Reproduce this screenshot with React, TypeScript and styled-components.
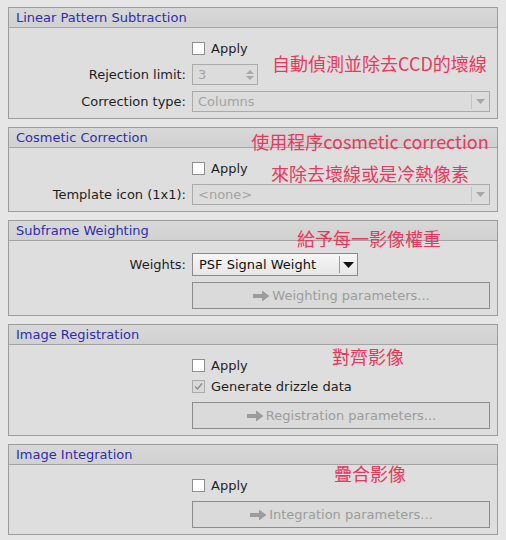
import styled, { createGlobalStyle } from 'styled-components';

const GlobalStyle = createGlobalStyle`
  body {
    margin: 7px 8px;
    background: #e6e6e6;
    font-family: 'DejaVu Sans', 'Liberation Sans', sans-serif;
    font-size: 13px;
    color: #1e1e1e;
  }
`;

const Section = styled.section`
  position: relative;
  border: 1px solid #9c9c9c;
  background: #dedede;
  margin-bottom: 8px;
`;

const Header = styled.div`
  height: 19px;
  line-height: 19px;
  padding-left: 7px;
  border-bottom: 1px solid #a4a4a4;
  background: linear-gradient(#d8d8d8, #d1d1d1);
  color: #2d2db0;
`;

const Body = styled.div<{ $pt?: number }>`
  display: flex;
  flex-direction: column;
  gap: 6px;
  padding: ${({ $pt }) => $pt ?? 10}px 7px 6px 0;
`;

const Row = styled.div<{ $h?: number }>`
  display: grid;
  grid-template-columns: 177px 1fr;
  column-gap: 6px;
  align-items: center;
  height: ${({ $h }) => $h ?? 21}px;
`;

const Label = styled.span`
  text-align: right;
  white-space: nowrap;
`;

const CheckGroup = styled.div`
  display: flex;
  flex-direction: column;
  gap: 1px;
`;

const CheckLabel = styled.label`
  display: flex;
  align-items: center;
  gap: 6px;
  height: 20px;
`;

const Box = styled.span<{ $checked?: boolean }>`
  width: 11px;
  height: 11px;
  border: 1px solid ${({ $checked }) => ($checked ? '#ababab' : '#8f8f8f')};
  background: ${({ $checked }) => ($checked ? '#d9d9d9' : '#ffffff')};
  display: flex;
  align-items: center;
  justify-content: center;
`;

const Field = styled.div<{ $width?: number; $enabled?: boolean }>`
  display: flex;
  align-items: stretch;
  box-sizing: border-box;
  height: 100%;
  width: ${({ $width }) => ($width ? `${$width}px` : '100%')};
  border: 1px solid ${({ $enabled }) => ($enabled ? '#8a8a8a' : '#ababab')};
  background: ${({ $enabled }) =>
    $enabled ? 'linear-gradient(#f7f7f7, #e6e6e6)' : '#dcdcdc'};
  color: ${({ $enabled }) => ($enabled ? '#111' : '#a3a3a3')};
`;

const FieldText = styled.span<{ $pl?: number }>`
  flex: 1;
  display: flex;
  align-items: center;
  padding-left: ${({ $pl }) => $pl ?? 5}px;
  white-space: nowrap;
`;

const DropArea = styled.span<{ $enabled?: boolean }>`
  width: 17px;
  display: flex;
  align-items: center;
  justify-content: center;
  border-left: 1px solid ${({ $enabled }) => ($enabled ? '#9a9a9a' : '#c4c4c4')};
  margin: 2px 0;
`;

const SpinArrows = styled.span`
  width: 14px;
  display: flex;
  flex-direction: column;
  justify-content: center;
  gap: 2px;
  align-items: center;
`;

const ParamButton = styled.div`
  box-sizing: border-box;
  height: 27px;
  border: 1px solid #8c8c8c;
  background: #dadada;
  color: #9c9c9c;
  display: flex;
  align-items: center;
  justify-content: center;
  gap: 1px;
`;

const Note = styled.div<{ $left: number; $top: number; $width?: number }>`
  position: absolute;
  left: ${({ $left }) => $left}px;
  top: ${({ $top }) => $top}px;
  width: ${({ $width }) => ($width ? `${$width}px` : 'auto')};
  font-family: 'Noto Sans CJK TC', 'Noto Sans', sans-serif;
  font-size: 18px;
  line-height: 22px;
  color: #e53a5d;
  white-space: nowrap;
  text-align: center;
`;

const NoteLines = styled(Note)`
  line-height: 32px;
`;

function Triangle({ color, w = 9, up = false }: { color: string; w?: number; up?: boolean }) {
  const h = Math.round(w * 0.55);
  return (
    <svg width={w} height={h} viewBox={`0 0 ${w} ${h}`}>
      <polygon
        points={up ? `0,${h} ${w},${h} ${w / 2},0` : `0,0 ${w},0 ${w / 2},${h}`}
        fill={color}
      />
    </svg>
  );
}

function Arrow() {
  return (
    <svg width="19" height="14" viewBox="0 0 19 14">
      <path d="M1 5h9V1.5L17.5 7 10 12.5V9H1z" fill="#9c9c9c" />
    </svg>
  );
}

function Check({ label, checked }: { label: string; checked?: boolean }) {
  return (
    <CheckLabel>
      <Box $checked={checked}>
        {checked && (
          <svg width="9" height="9" viewBox="0 0 9 9">
            <polyline points="1,4.5 3.5,7 8,1.5" fill="none" stroke="#8e8e8e" strokeWidth="1.4" />
          </svg>
        )}
      </Box>
      {label}
    </CheckLabel>
  );
}

function Combo({ value, enabled, width }: { value: string; enabled?: boolean; width?: number }) {
  return (
    <Field $enabled={enabled} $width={width}>
      <FieldText $pl={enabled ? 6 : 5}>{value}</FieldText>
      <DropArea $enabled={enabled}>
        <Triangle color={enabled ? '#111' : '#a6a6a6'} w={enabled ? 11 : 9} />
      </DropArea>
    </Field>
  );
}

function ParamsButton({ label }: { label: string }) {
  return (
    <Row $h={27}>
      <span />
      <ParamButton>
        <Arrow />
        {label}
      </ParamButton>
    </Row>
  );
}

export default function App() {
  return (
    <>
      <GlobalStyle />
      <Section>
        <Header>Linear Pattern Subtraction</Header>
        <Body>
          <Row $h={20}>
            <span />
            <Check label="Apply" />
          </Row>
          <Row>
            <Label>Rejection limit:</Label>
            <Field $width={66}>
              <FieldText>3</FieldText>
              <SpinArrows>
                <Triangle color="#a8a8a8" w={8} up />
                <Triangle color="#a8a8a8" w={8} />
              </SpinArrows>
            </Field>
          </Row>
          <Row>
            <Label>Correction type:</Label>
            <Combo value="Columns" />
          </Row>
        </Body>
        <Note $left={263} $top={44}>自動偵測並除去CCD的壞線</Note>
      </Section>

      <Section>
        <Header>Cosmetic Correction</Header>
        <Body>
          <Row $h={20}>
            <span />
            <Check label="Apply" />
          </Row>
          <Row>
            <Label>Template icon (1x1):</Label>
            <Combo value="<none>" />
          </Row>
        </Body>
        <NoteLines $left={231} $top={-3} $width={260}>
          使用程序cosmetic correction
          <br />
          來除去壞線或是冷熱像素
        </NoteLines>
      </Section>

      <Section>
        <Header>Subframe Weighting</Header>
        <Body $pt={12}>
          <Row $h={23}>
            <Label>Weights:</Label>
            <Combo value="PSF Signal Weight" enabled width={166} />
          </Row>
          <ParamsButton label="Weighting parameters..." />
        </Body>
        <Note $left={288} $top={6}>給予每一影像權重</Note>
      </Section>

      <Section>
        <Header>Image Registration</Header>
        <Body>
          <Row $h={41}>
            <span />
            <CheckGroup>
              <Check label="Apply" />
              <Check label="Generate drizzle data" checked />
            </CheckGroup>
          </Row>
          <ParamsButton label="Registration parameters..." />
        </Body>
        <Note $left={323} $top={20}>對齊影像</Note>
      </Section>

      <Section>
        <Header>Image Integration</Header>
        <Body>
          <Row $h={20}>
            <span />
            <Check label="Apply" />
          </Row>
          <ParamsButton label="Integration parameters..." />
        </Body>
        <Note $left={325} $top={17}>疊合影像</Note>
      </Section>
    </>
  );
}
